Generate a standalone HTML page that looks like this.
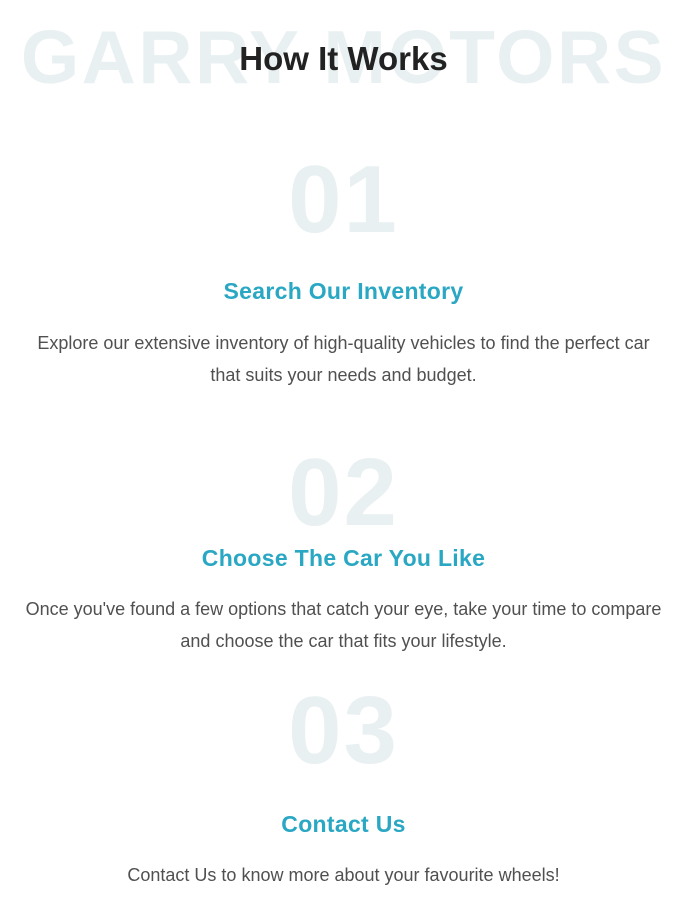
<!DOCTYPE html>
<html><head><meta charset="utf-8"><style>
html,body{margin:0;padding:0;background:#fff;width:687px;height:900px;overflow:hidden;position:relative}
.a{position:absolute;left:0;width:687px;text-align:center;white-space:nowrap;font-family:"Liberation Sans",sans-serif}
.bg{font-size:75px;line-height:80px;font-weight:bold;color:#e9f0f2;top:17px;letter-spacing:2.5px}
.t{font-size:33px;line-height:40px;font-weight:bold;color:#222;top:39px}
.n{font-size:96px;line-height:100px;font-weight:bold;color:#e9f0f2;letter-spacing:2px}
.h{font-size:23px;line-height:30px;font-weight:bold;color:#29a7c3;letter-spacing:0.3px}
.p{font-size:18px;line-height:32px;color:#505050}
</style></head><body>
<div class="a bg">GARRY MOTORS</div>
<div class="a t">How It Works</div>
<div class="a n" style="top:150px">01</div>
<div class="a h" style="top:276px">Search Our Inventory</div>
<div class="a p" style="top:327px">Explore our extensive inventory of high-quality vehicles to find the perfect car<br>that suits your needs and budget.</div>
<div class="a n" style="top:443px">02</div>
<div class="a h" style="top:543px">Choose The Car You Like</div>
<div class="a p" style="top:593px">Once you've found a few options that catch your eye, take your time to compare<br>and choose the car that fits your lifestyle.</div>
<div class="a n" style="top:681px">03</div>
<div class="a h" style="top:809px">Contact Us</div>
<div class="a p" style="top:859px">Contact Us to know more about your favourite wheels!</div>
</body></html>
